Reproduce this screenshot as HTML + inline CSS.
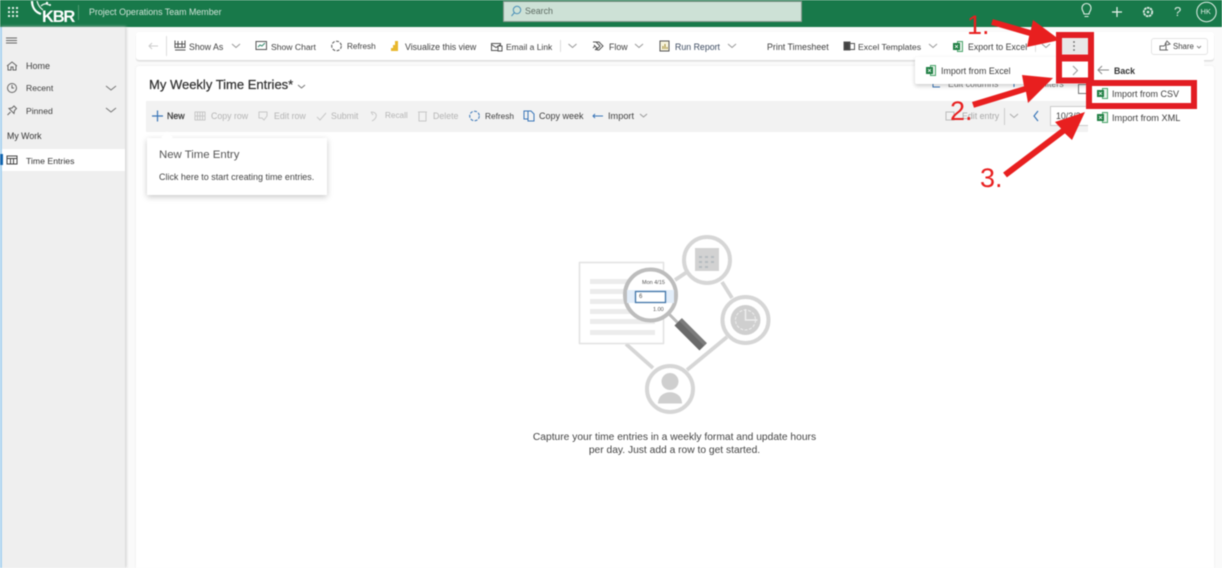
<!DOCTYPE html>
<html><head><meta charset="utf-8">
<style>
html,body{margin:0;padding:0;width:1222px;height:568px;overflow:hidden;background:#fafafa;font-family:"Liberation Sans",sans-serif}
#w{position:absolute;left:0;top:0;width:1222px;height:568px;filter:blur(.45px);overflow:hidden}
.t{position:absolute;white-space:nowrap;font-size:8.8px;line-height:12px;color:#3e3e3e}
.b{position:absolute}
svg{position:absolute;overflow:visible}
.d{color:#b4b4b4}
.arrow{fill:#e81f1f}
</style></head><body><div id="w">
<div class="b" style="left:0;top:0;width:1222px;height:27px;background:#18794a"></div>
<div class="b" style="left:503px;top:1px;width:297px;height:19px;background:#cde1d6;border:1px solid #8a9a90"></div>
<svg style="left:0;top:0" width="1222" height="568" fill="none">
<g fill="#e4f0e9"><rect x="8" y="7" width="2" height="2"/><rect x="12" y="7" width="2" height="2"/><rect x="16" y="7" width="2" height="2"/><rect x="8" y="11" width="2" height="2"/><rect x="12" y="11" width="2" height="2"/><rect x="16" y="11" width="2" height="2"/><rect x="8" y="15" width="2" height="2"/><rect x="12" y="15" width="2" height="2"/><rect x="16" y="15" width="2" height="2"/></g>
<path d="M32 1c0 6 3 11 9 13" stroke="#fff" stroke-width="2.200"/>
<path d="M37 1c1 4 3 7 6 9M41 6c2-2 5-3 8-1" stroke="#e8f3ec" stroke-width="1.300"/>
<circle cx="47" cy="3" r="1.200" fill="#fff"/><circle cx="50" cy="5" r="1" fill="#fff"/>
<path d="M78.500 5v15" stroke="#4d9a70"/>
<circle cx="517" cy="10" r="3.700" stroke="#4a90b8"/><path d="M514.500 12.500l-3 3.500" stroke="#4a90b8"/>
<path d="M1084 14c0-2-2-3-2-6a4.500 4.500 0 1 1 9 0c0 3-2 4-2 6zM1084.500 16.500h4" stroke="#e2efe7" stroke-width="1.100"/>
<path d="M1117 7v10M1112 12h10" stroke="#eaf4ee" stroke-width="1.200"/>
<circle cx="1148" cy="12" r="4.200" stroke="#dcebe2" stroke-width="1.800" stroke-dasharray="2.500 .6"/><circle cx="1148" cy="12" r="1.300" fill="#dcebe2"/>
<circle cx="1206.500" cy="12" r="9.700" stroke="#e2efe7"/>
</svg>
<div class="t" style="left:42px;top:9px;font-size:16.500px;font-weight:bold;color:#fff;letter-spacing:-1.200px;line-height:16px">KBR</div>
<div class="t" style="left:89px;top:6px;font-size:8.900px;color:#cfe3d7">Project Operations Team Member</div>
<div class="t" style="left:525px;top:5px;color:#5c6a62">Search</div>
<div class="t" style="left:1174px;top:5px;color:#dcebe2;font-size:13px;line-height:14px">?</div>
<div class="t" style="left:1200.500px;top:6px;color:#dcebe2;font-size:7.500px">HK</div>

<div class="b" style="left:0;top:27px;width:125px;height:541px;background:#efefef;box-shadow:1px 0 3px #c8c8c8"></div>
<div class="b" style="left:0;top:27px;width:1.500px;height:541px;background:#a9d3f0"></div>
<div class="b" style="left:2px;top:149px;width:123px;height:22px;background:#fff"></div>
<div class="b" style="left:0;top:154px;width:2.500px;height:11px;background:#1266b0"></div>
<svg style="left:0;top:0" width="130" height="180" fill="none" stroke="#666">
<path d="M6 38h11M6 40.500h11M6 43h11"/>
<path d="M7 66l5-4 5 4M8 65v5h3v-3h2v3h3v-5"/>
<circle cx="12" cy="88" r="4.500"/><path d="M12 85v3h2"/>
<path d="M7.500 115l3-3M9 108.500l5 5 .5-3 2-2-2.500-2.500-2 2z"/>
<rect x="7" y="156" width="10" height="8" stroke="#444"/><path d="M7 158.500h10M10.500 158v6M13.500 158v6" stroke="#444"/>
<path d="M106 86l5 4 5-4M106 108l5 4 5-4" stroke="#777"/>
</svg>
<div class="t" style="left:26px;top:60px;font-size:9px">Home</div>
<div class="t" style="left:26px;top:82px;font-size:8.600px">Recent</div>
<div class="t" style="left:26px;top:105px;font-size:8.600px">Pinned</div>
<div class="t" style="left:7px;top:130px;color:#333">My Work</div>
<div class="t" style="left:26px;top:155px;color:#333;font-size:8.700px">Time Entries</div>

<div class="b" style="left:136px;top:32px;width:1078px;height:28px;background:#fff;border-radius:3px;box-shadow:0 1.500px 1px #ddd"></div>
<div class="b" style="left:136px;top:66px;width:1078px;height:502px;background:#fff;border-radius:3px 3px 0 0;box-shadow:0 0 2px #e8e8e8"></div>
<div class="b" style="left:146px;top:101px;width:1058px;height:31px;background:#f2f2f2"></div>

<svg style="left:0;top:0" width="1222" height="140" fill="none" stroke="#555">
<path d="M149 46h9M152 43l-3 3 3 3" stroke="#ccc"/><path d="M166.500 36v20" stroke="#ddd"/>
<path d="M175 40.500v7h10v-7M175 50h10.500M178 41v6M182 41v6M175 44h10"/>
<rect x="256" y="41.500" width="10.500" height="8"/><path d="M258 47l2-2 2 1 3-3" stroke="#3a8a70"/>
<circle cx="336.500" cy="46" r="4.800" stroke-dasharray="3 1.400"/>
<path d="M391 51v-3h2v-3h2v-4h3v10z" fill="#e8b72c" stroke="none"/>
<rect x="491.500" y="43.500" width="9" height="7"/><path d="M491.500 44.500l4.500 3 4.500-3"/><rect x="498" y="46" width="4" height="5" fill="#fff"/>
<path d="M593 42h6l4 4-4 4h-2M596 42l4 4-4 4M594 45l3 3-2 2M593 48l2-2"/>
<rect x="660" y="41" width="9" height="10" fill="#f8f4dc"/><path d="M663 49v-3M665 49v-5M667 49v-2" stroke="#a08a30"/>
<rect x="844" y="42" width="6" height="8" fill="#444"/><rect x="849.500" y="43.500" width="5" height="6"/>
<g stroke="#999"><path d="M232 44l4 3.500 4-3.500M568.500 44l4 3.500 4-3.500M635 44l4 3.500 4-3.500M728 44l4 3.500 4-3.500M929 44l4 3.500 4-3.500M1042 44l4 3.500 4-3.500"/></g>
<path d="M560.500 40v12M1035.500 40v12" stroke="#ddd"/>
<path d="M298 85l3.500 3 3.500-3" stroke="#777"/>
<g stroke="#3a76b8"><path d="M152 116h11M157.500 110.500v11" stroke-width="1.200"/>
<circle cx="474.500" cy="116" r="4.800" stroke-dasharray="3 1.400"/>
<path d="M528 111h3l3 3v7h-6v-10zM528 119h-4v-8h4"/>
<path d="M593 116h10M595 114l-2 2 2 2" /></g>
<g stroke="#c8c8c8"><rect x="195" y="112" width="10" height="8"/><path d="M195 116h10M200 112v8M197.500 112v8M202.500 112v8"/>
<path d="M259 112h8v4l-3 4-2-2h-3z"/><path d="M317 117l3 3 6-7"/><path d="M371 112c4 0 6 2 5 5s-3 3-4 4M371 112l2 3"/><rect x="419" y="112" width="7" height="9"/><path d="M418 112h9"/></g>
<path d="M640 114l3.500 3 3.500-3" stroke="#999"/>
<path d="M1010 114l4 3.500 4-3.500" stroke="#aaa"/><path d="M1038 111l-4 5 4 5" stroke="#3a76b8" stroke-width="1.200"/><path d="M1004.500 108v17" stroke="#ccc"/>
<rect x="946" y="112" width="8" height="8" stroke="#bbb"/>
<path d="M933 81v6h7M936 81v3" stroke="#3a76b8"/><path d="M1014 81v6" stroke="#3a76b8"/>
</svg>
<div class="t" style="left:189px;top:41px">Show As</div>
<div class="t" style="left:271px;top:41px;font-size:8.600px">Show Chart</div>
<div class="t" style="left:347px;top:41px;font-size:8.200px">Refresh</div>
<div class="t" style="left:405px;top:41px;font-size:8.800px">Visualize this view</div>
<div class="t" style="left:506px;top:41px;font-size:8.500px">Email a Link</div>
<div class="t" style="left:609px;top:41px">Flow</div>
<div class="t" style="left:675px;top:41px;color:#3c4a60">Run Report</div>
<div class="t" style="left:767px;top:41px;font-size:8.900px">Print Timesheet</div>
<div class="t" style="left:858px;top:41px;font-size:8.700px">Excel Templates</div>
<div class="t" style="left:968px;top:41px">Export to Excel</div>

<div class="b" style="left:1151px;top:38px;width:55px;height:15px;border:1px solid #e4e4e4;border-radius:3px;background:#fff"></div>
<svg style="left:0;top:0" width="1222" height="60" fill="none" stroke="#666">
<path d="M1160 50v-4h4l2-2v6zM1165 44l2-3 3 3-3 1M1160 50h8" />
<path d="M1197 46l2 2 2-2" stroke="#888"/>
</svg>
<div class="t" style="left:1173px;top:41px;font-size:7.800px">Share</div>
<div class="b" style="left:1062px;top:37px;width:26px;height:17px;background:#e8e8e8"></div>
<svg style="left:0;top:0" width="1222" height="60"><g fill="#666"><circle cx="1074" cy="42" r=".9"/><circle cx="1074" cy="46" r=".9"/><circle cx="1074" cy="50" r=".9"/></g></svg>

<div class="t" style="left:149px;top:77px;font-size:13px;line-height:16px;color:#2e2e2e;-webkit-text-stroke:.2px #2e2e2e">My Weekly Time Entries*</div>
<div class="t" style="left:167px;top:110px;color:#333;-webkit-text-stroke:.2px #333">New</div>
<div class="t d" style="left:211px;top:110px">Copy row</div>
<div class="t d" style="left:274px;top:110px">Edit row</div>
<div class="t d" style="left:331px;top:110px">Submit</div>
<div class="t d" style="left:385px;top:110px;font-size:8.200px">Recall</div>
<div class="t d" style="left:433px;top:110px">Delete</div>
<div class="t" style="left:485px;top:110px;font-size:8.300px">Refresh</div>
<div class="t" style="left:539px;top:110px;font-size:9px">Copy week</div>
<div class="t" style="left:608px;top:110px;font-size:9.200px">Import</div>
<div class="t d" style="left:962px;top:110px;color:#a8a8a8">Edit entry</div>
<div class="b" style="left:1050px;top:106px;width:40px;height:18px;background:#fff;border:1px solid #ccc"></div>
<div class="t" style="left:1056px;top:110px">10/3/2</div>
<div class="t" style="left:948px;top:78px;color:#777">Edit columns</div>
<div class="t" style="left:1025px;top:78px;color:#777">Edit filters</div>
<div class="b" style="left:1078px;top:84px;width:8px;height:8px;border:1px solid #777"></div>

<div class="b" style="left:147px;top:138px;width:180px;height:57px;background:#fff;box-shadow:0 2px 6px rgba(0,0,0,.22)"></div>
<div class="b" style="left:163px;top:133px;width:8px;height:8px;background:#fff;transform:rotate(45deg)"></div>
<div class="t" style="left:159px;top:148px;font-size:11.400px;line-height:14px;color:#555">New Time Entry</div>
<div class="t" style="left:159px;top:171px;font-size:8.960px;color:#444">Click here to start creating time entries.</div>

<svg style="left:0;top:0" width="1222" height="568" fill="none">
<g stroke="#d6d6d6" stroke-width="3.800">
<path d="M675 280l12-8M722 282l10 16M687 370l40-33M626 344l27 24"/>
</g>
<rect x="579.500" y="262.500" width="84" height="81" fill="#fff" stroke="#e2e2e2" stroke-width="1.500"/>
<g fill="#ececec"><rect x="590" y="279" width="66" height="5"/><rect x="590" y="289" width="66" height="5"/><rect x="590" y="299" width="66" height="5"/><rect x="590" y="309" width="66" height="5"/><rect x="590" y="319" width="65" height="5"/><rect x="590" y="330" width="65" height="5"/></g>
<circle cx="707" cy="260" r="23" fill="#fff" stroke="#d6d6d6" stroke-width="4"/>
<rect x="695" y="248" width="24" height="23" fill="#d2d2d2"/>
<g fill="#b5bcc0"><rect x="699" y="256" width="3" height="2"/><rect x="705" y="256" width="3" height="2"/><rect x="711" y="256" width="3" height="2"/><rect x="699" y="261" width="3" height="2"/><rect x="705" y="261" width="3" height="2"/><rect x="711" y="261" width="3" height="2"/><rect x="699" y="266" width="3" height="2"/><rect x="705" y="266" width="3" height="2"/></g>
<circle cx="745.500" cy="320" r="23" fill="#fff" stroke="#d6d6d6" stroke-width="4"/>
<circle cx="745.500" cy="320" r="15" fill="#cfcfcf"/><circle cx="745.500" cy="320" r="10" stroke="#eee" stroke-dasharray="3 1.500"/><path d="M745.500 309v11h12" stroke="#eee" stroke-width="1.500"/>
<circle cx="670" cy="389" r="23" fill="#fff" stroke="#d6d6d6" stroke-width="4"/>
<circle cx="670" cy="381.500" r="8.500" fill="#cfcfcf"/><path d="M658 403.500c0-15 24-15 24 0z" fill="#cfcfcf"/>
<path d="M669 314l9 9" stroke="#bbb" stroke-width="3"/>
<path d="M678 322l25 25" stroke="#6a6a6a" stroke-width="10"/>
<path d="M680.500 319.500l25 25" stroke="#7c7c7c" stroke-width="4"/>
<circle cx="650.500" cy="295" r="25.500" fill="#fff" stroke="#bdbdbd" stroke-width="4"/>
<rect x="627" y="290" width="47" height="13" fill="#e3eefa"/>
<rect x="635.500" y="291.500" width="30" height="11" fill="#fff" stroke="#3f74a8" stroke-width="1.300"/>
</svg>
<div class="t" style="left:642px;top:279px;font-size:5.500px;line-height:8px;color:#555">Mon 4/15</div>
<div class="t" style="left:639px;top:293px;font-size:6px;line-height:8px;color:#555">6</div>
<div class="t" style="left:653px;top:306px;font-size:5.500px;line-height:8px;color:#555">1.00</div>
<div class="t" style="left:470px;top:431px;width:409px;text-align:center;white-space:normal;font-size:10.250px;line-height:13px;color:#444">Capture your time entries in a weekly format and update hours<br>per day. Just add a row to get started.</div>

<div class="b" style="left:915px;top:57px;width:173px;height:27px;background:#fff;box-shadow:0 2px 4px rgba(0,0,0,.2);border-radius:2px"></div>
<div class="b" style="left:1088px;top:58px;width:116px;height:74px;background:#fff"></div>
<svg style="left:0;top:0" width="1222" height="140" fill="none">
<g stroke="#4aa56b"><rect x="957.500" y="41.500" width="5" height="10" fill="#e7f3ea"/><rect x="930.500" y="65.500" width="5" height="10" fill="#e7f3ea"/><rect x="1102.500" y="88.500" width="5" height="10" fill="#e7f3ea"/><rect x="1102.500" y="112.500" width="5" height="10" fill="#e7f3ea"/></g>
<g fill="#1f7f43"><rect x="953" y="43" width="7" height="7"/><rect x="926" y="67" width="7" height="7"/><rect x="1097" y="90" width="7" height="7"/><rect x="1097" y="114" width="7" height="7"/></g>
<g stroke="#fff" stroke-width=".8"><path d="M955 45l3 3M958 45l-3 3M928 69l3 3M931 69l-3 3M1099 92l3 3M1102 92l-3 3M1099 116l3 3M1102 116l-3 3"/></g>
<path d="M1073 66l4.500 4.500-4.500 4.500" stroke="#999"/>
<path d="M1098 70h11M1102 66l-4 4 4 4" stroke="#888"/>
</svg>
<div class="t" style="left:941px;top:65px;font-size:8.900px">Import from Excel</div>
<div class="t" style="left:1114px;top:65px;color:#333;font-weight:bold">Back</div>
<div class="t" style="left:1112px;top:88px;font-size:9px">Import from CSV</div>
<div class="t" style="left:1112px;top:112px;font-size:9.200px">Import from XML</div>

<svg style="left:0;top:0" width="1222" height="568" fill="none">
<rect x="1059" y="35" width="32" height="45.500" stroke="#e21d23" stroke-width="6"/>
<path d="M1058 58h34" stroke="#e21d23" stroke-width="7"/>
<rect x="1089" y="83" width="105" height="23" stroke="#e21d23" stroke-width="6"/>
<path class="arrow" d="M992.800 19.100l38 11 2.200-10.100 27 20-33 7 2.200-11.100-38-11z"/>
<path class="arrow" d="M972 102l52-15.800-2-11.200 31 3-25 25-2-11.200-52 16z"/>
<path class="arrow" d="M1003.100 172.600l58-44L1055 122l30-10-13 28-7.100-6.600-58 44z"/>
</svg>
<div class="t" style="left:967px;top:10px;font-size:27px;line-height:30px;color:#e81f1f">1.</div>
<div class="t" style="left:950px;top:96px;font-size:27px;line-height:30px;color:#e81f1f">2.</div>
<div class="t" style="left:980px;top:163px;font-size:27px;line-height:30px;color:#e81f1f">3.</div>
</div></body></html>
